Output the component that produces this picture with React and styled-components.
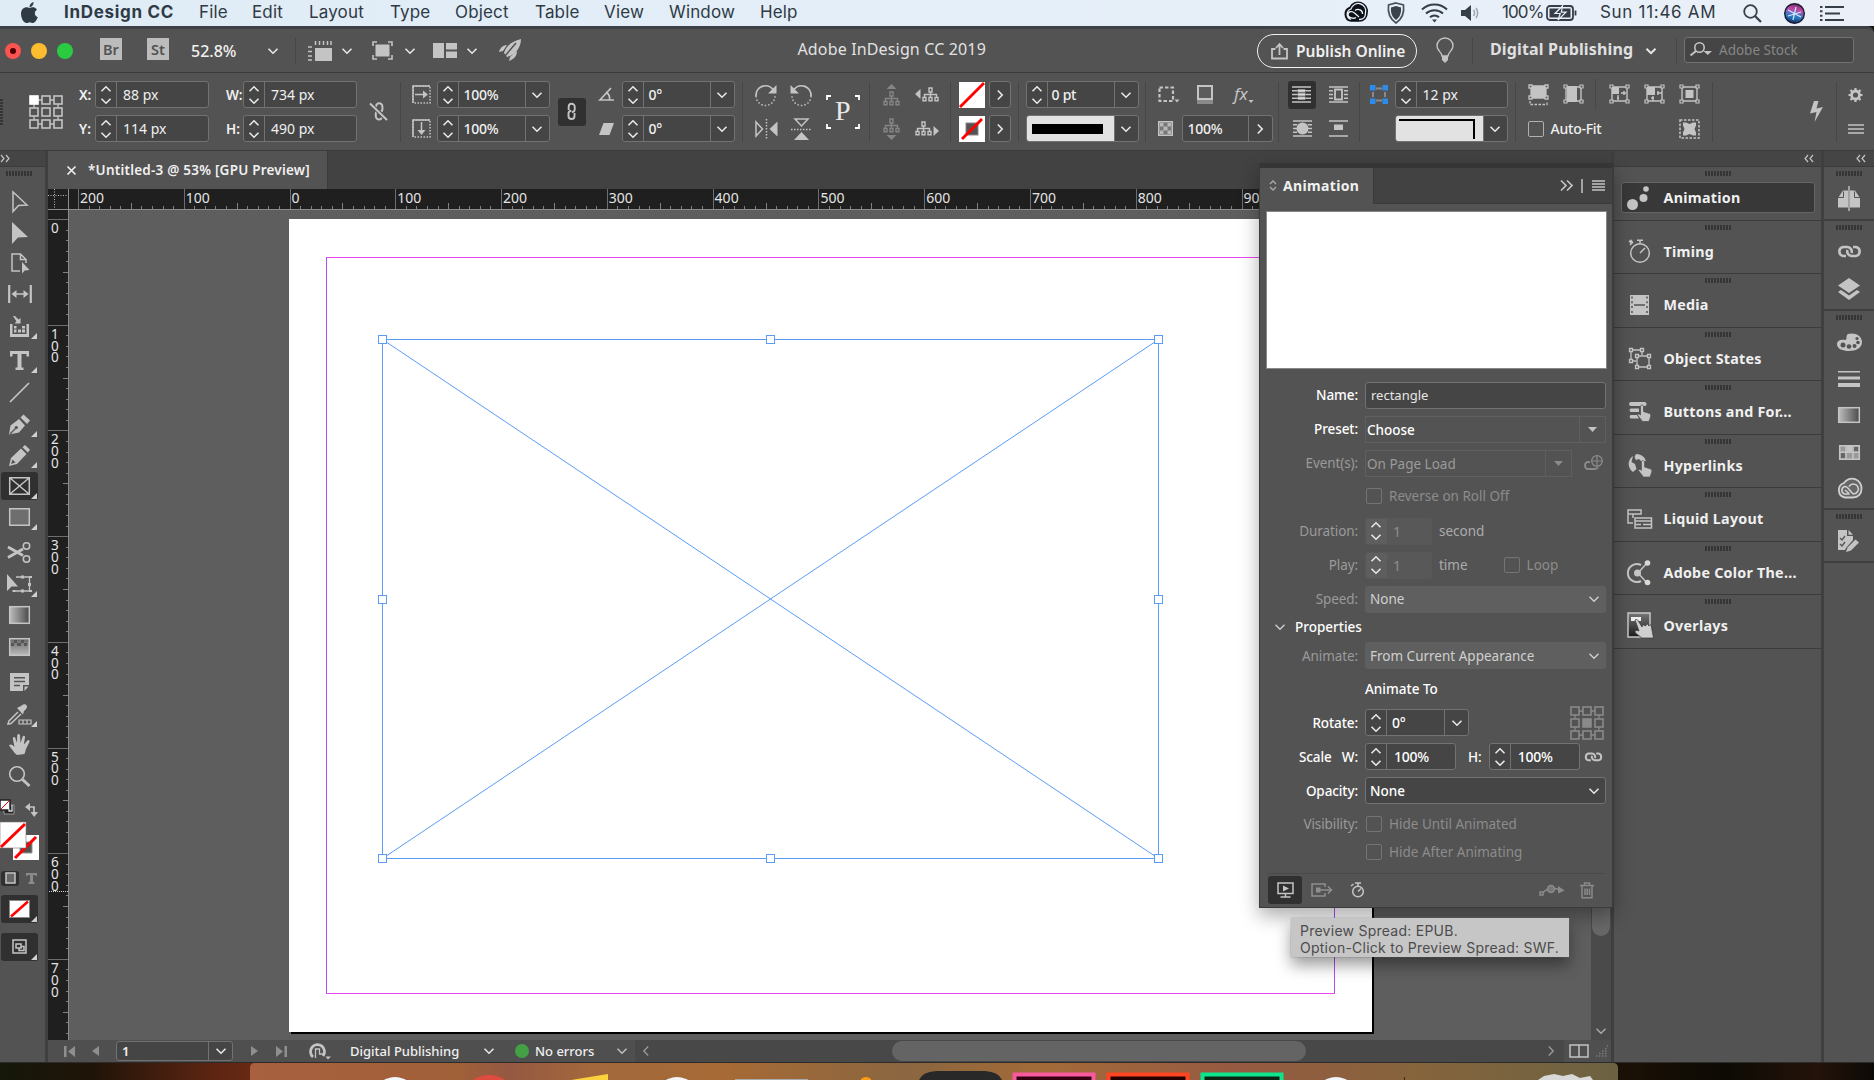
import React, { Fragment } from 'react';
import styled, { createGlobalStyle, css } from 'styled-components';

const GlobalStyle = createGlobalStyle`
  * { box-sizing: border-box; }
  body {
    margin: 0;
    overflow: hidden;
    background: #1c1206;
    font-family: "Noto Sans", "Open Sans", sans-serif;
    color: #f0f0f0;
  }
  svg { display: block; flex: none; overflow: visible; }
`

const Screen = styled.div`
  width: 1874px;
  height: 1080px;
  display: flex;
  flex-direction: column;
  overflow: hidden;
`

/* ---------- mac menu bar ---------- */

const MacBar = styled.div`
  height: 26px;
  flex: none;
  display: flex;
  align-items: center;
  background: linear-gradient(90deg, #dfebf5, #e3eef8 45%, #ebf0f8);
  color: #2f3a45;
  font-family: Inter, "Liberation Sans", sans-serif;
  font-size: 17px;
  line-height: 22px;
  white-space: nowrap;
`

const MacItem = styled.span`
  flex: none;
  width: ${p => p.$w}px;
  letter-spacing: ${p => p.$ls === undefined ? 0.15 : p.$ls}px;
  font-weight: ${p => p.$bold ? 700 : 400};
  padding-bottom: 3px;
`

const Push = styled.div`
  flex: 1;
`

/* ---------- shared bits ---------- */

const Slot = styled.div`
  flex: none;
  width: ${p => p.$w}px;
  margin-left: ${p => p.$gap || 0}px;
  display: flex;
  align-items: center;
  white-space: nowrap;
`

const Rule = styled.div`
  flex: none;
  width: 1px;
  height: ${p => p.$h || 60}px;
  margin-left: ${p => p.$gap || 0}px;
  align-self: ${p => p.$top ? 'flex-start' : 'auto'};
  margin-top: ${p => p.$top ? 6 : 0}px;
  background: #474747;
`

const Field = styled.div`
  flex: none;
  display: flex;
  align-items: stretch;
  width: ${p => p.$w}px;
  height: 27px;
  border: 1px solid #727272;
  border-radius: 3px;
  background: #454545;
  overflow: hidden;
  ${p => p.$off && css`
    border-color: transparent;
    background: #585858;
    color: #8d8d8d;
  `}
`

const Spin = styled.div`
  width: 21px;
  flex: none;
  display: flex;
  flex-direction: column;
  align-items: center;
  justify-content: space-between;
  padding: 3.5px 0;
  border-right: 1px solid ${p => p.$off ? 'transparent' : '#727272'};
  background: ${p => p.$off ? '#5e5e5e' : 'transparent'};
`

const Value = styled.div`
  flex: 1;
  padding-left: ${p => p.$pad || 6}px;
  font-size: 14px;
  line-height: 26px;
  white-space: nowrap;
  font-weight: ${p => p.$strong ? 500 : 400};
  letter-spacing: ${p => p.$strong ? -0.25 : 0}px;
`

const Drop = styled.div`
  width: ${p => p.$w || 24}px;
  flex: none;
  display: flex;
  align-items: center;
  justify-content: center;
  border-left: 1px solid ${p => p.$line || '#727272'};
`

const Chevron = ({ dir = 'down', size = 10, color = '#e8e8e8', w = 1.6 }) => {
  const turn = { down: 0, up: 180, left: 90, right: -90 }[dir];
  return (
    <svg width={size} height={size * 0.6} viewBox="0 0 10 6">
      <path d="M0.5 0.8 5 5.2 9.5 0.8" fill="none" stroke={color} strokeWidth={w} transform={`rotate(${turn} 5 3)`} />
    </svg>
  )
}

const Spinner = ({ off }) => (
  <Spin $off={off}>
    <Chevron dir="up" />
    <Chevron />
  </Spin>
)

const NumField = ({ w, value, drop, strong, off, pad }) => (
  <Field $w={w} $off={off}>
    <Spinner off={off} />
    <Value $pad={pad} $strong={strong}>{value}</Value>
    {drop && <Drop><Chevron /></Drop>}
  </Field>
)

/* Icon with light grey line work; children are the shapes */
const Icon = ({ w, h = w, box, children, fill = 'none', stroke = '#c4c4c4', sw = 1.5, ...rest }) => (
  <svg width={w} height={h} viewBox={box || `0 0 ${w} ${h}`} fill={fill} stroke={stroke} strokeWidth={sw} {...rest}>
    {children}
  </svg>
)

const Solid = (props) => <Icon fill="#c4c4c4" stroke="none" {...props} />

const RefGrid = ({ active, color = '#c4c4c4', on = '#fff' }) => (
  <Icon w={34} stroke={color} sw={1.6}>
    <path d="M5 5H29M5 29H29M5 5V29M29 5V29" strokeWidth="1.3" />
    {[0, 1, 2, 3, 4, 5, 6, 7, 8].map(i => (
      <rect key={i} x={1 + (i % 3) * 12} y={1 + Math.floor(i / 3) * 12} width="8" height="8"
            fill={i === active ? on : '#535353'} stroke={i === active ? on : color} />
    ))}
  </Icon>
)

/* ---------- application bar ---------- */

const Frame = styled.div`
  flex: none;
  height: 1037px;
  display: flex;
  flex-direction: column;
  background: #535353;
  border-top: 3px solid #3d4045;
  border-bottom: 1px solid #2c2c2c;
  border-top-right-radius: 7px;
`

const AppBar = styled.div`
  height: 44px;
  flex: none;
  display: flex;
  align-items: center;
  border-bottom: 1px solid #3b3b3b;
`

const Light = styled.div`
  width: 16px;
  height: 16px;
  flex: none;
  border-radius: 50%;
  margin-left: ${p => p.$gap}px;
  background: ${p => p.$color};
  display: flex;
  align-items: center;
  justify-content: center;
  &::after {
    content: ${p => p.$dot ? '""' : 'none'};
    width: 6px;
    height: 6px;
    border-radius: 50%;
    background: #4d0000;
  }
`

const Badge = styled.div`
  width: 22px;
  height: 22px;
  flex: none;
  margin-left: ${p => p.$gap}px;
  margin-top: -3px;
  background: #bcbcbc;
  color: #535353;
  font-size: 14.5px;
  font-weight: 600;
  line-height: 23px;
  text-align: center;
`

const Zoom = styled(Slot)`
  font-size: 16px;
  font-weight: 500;
  letter-spacing: 0;
`

const Title = styled(Slot)`
  font-size: 16px;
  color: #e2e2e2;
  letter-spacing: 0.15px;
  padding-bottom: 3px;
`

const Publish = styled.div`
  width: 160px;
  height: 34px;
  flex: none;
  display: flex;
  align-items: center;
  gap: 8px;
  padding-left: 13px;
  margin-left: ${p => p.$gap}px;
  border: 1.5px solid #f0f0f0;
  border-radius: 17px;
  font-size: 15.5px;
  font-weight: 600;
  white-space: nowrap;
`

const Workspace = styled(Slot)`
  font-size: 16px;
  font-weight: 700;
  color: #e0e0e0;
  letter-spacing: 0.15px;
  padding-bottom: 3px;
`

const StockSearch = styled.div`
  width: 170px;
  height: 26px;
  flex: none;
  margin-left: ${p => p.$gap}px;
  margin-top: -2px;
  display: flex;
  align-items: center;
  gap: 7px;
  padding-left: 5px;
  border: 1.5px solid #727272;
  border-radius: 3px;
  background: #454545;
  color: #858585;
  font-size: 13.5px;
`

/* ---------- control bar ---------- */

const ControlBar = styled.div`
  height: 78px;
  flex: none;
  display: flex;
  align-items: center;
  border-bottom: 1px solid #3b3b3b;
`

const Stack = styled.div`
  flex: none;
  width: ${p => p.$w}px;
  margin-left: ${p => p.$gap || 0}px;
  display: grid;
  grid-template-rows: 27px 27px;
  row-gap: 7px;
  align-items: center;
  white-space: nowrap;
`

const Row = styled.div`
  display: flex;
  align-items: center;
  gap: ${p => p.$gap || 0}px;
`

const AxisLabel = styled.div`
  font-size: 13.5px;
  font-weight: 600;
`

const DarkKey = styled.div`
  width: ${p => p.$w || 28}px;
  height: 28px;
  flex: none;
  margin-left: ${p => p.$gap || 0}px;
  border-radius: 3px;
  background: #303030;
  display: flex;
  align-items: center;
  justify-content: center;
`

const ArrowKey = styled.div`
  width: 22px;
  height: 27px;
  border: 1px solid #727272;
  border-radius: 3px;
  background: #454545;
  display: flex;
  align-items: center;
  justify-content: center;
`

const Sample = styled.div`
  flex: 1;
  background: #e2e2e2;
  display: flex;
  align-items: center;
  padding-left: 5px;
`

const Check = styled.div`
  width: 16px;
  height: 16px;
  flex: none;
  border: 1.5px solid ${p => p.$off ? '#747474' : '#b0b0b0'};
  border-radius: 2px;
`

const Grip = styled.div`
  width: 26px;
  height: 5px;
  background: repeating-linear-gradient(90deg, #353535 0 2px, transparent 2px 3px);
`

const SideGrip = styled.div`
  width: 3px;
  height: 26px;
  background: repeating-linear-gradient(180deg, #353535 0 2px, transparent 2px 3px);
`

const Tree = ({ dir, dim }) => {
  const c = dim ? '#858585' : '#c4c4c4';
  const vertical = dir === 'up' || dir === 'down';
  const ox = dir === 'left' ? 7 : 0;
  const oy = dir === 'up' ? 7 : 0;
  const arrows = {
    up: 'M3.5 5 8.5 0 13.5 5Z', down: 'M3.5 17 8.5 22 13.5 17Z',
    left: 'M5.5 2V12L0 7Z', right: 'M18.5 5V15L24 10Z'
  };
  return (
    <Icon w={vertical ? 17 : 24} h={vertical ? 22 : 15} stroke={c} sw={1.4}>
      <g transform={`translate(${ox} ${oy})`}>
        <path d="M7 1H10V5H7ZM8.5 5V10M2.5 10V7.5H14.5V10M1 10.5H4V13.8H1ZM7 10.5H10V13.8H7ZM13 10.5H16V13.8H13Z" />
      </g>
      <path d={arrows[dir]} fill={c} stroke="none" />
    </Icon>
  )
}

const NoneSwatch = ({ w = 26, stroke }) => (
  <svg width={w} height={w} viewBox="0 0 26 26">
    <rect width="26" height="26" fill="#fff" />
    {stroke && <rect x="7" y="7" width="12" height="12" fill="#535353" stroke="#888" />}
    <path d={stroke ? 'M3 23 23 3' : 'M1 25 25 1'} stroke="#f00" strokeWidth="2.8" />
  </svg>
)

const Link = ({ cut, size = 18, color = '#c4c4c4' }) => (
  <Icon w={size} h={19} box="0 0 18 19" stroke={color} sw={2}>
    <path d="M6 8V4.5a3.2 3.2 0 0 1 6.4 0V7.5a3 3 0 0 1-3 2.6M12.2 11V14.3a3.2 3.2 0 0 1-6.4 0V11.5a3 3 0 0 1 3-2.8" />
    {cut && <path d="M0 1.5 17 18" stroke="#535353" strokeWidth="4" />}
    {cut && <path d="M0 1.5 17 18" />}
  </Icon>
)

const ChainLink = ({ w = 25, color = '#c4c4c4' }) => (
  <Icon w={w} h={w * 0.52} box="0 0 25 13" stroke={color} sw={2.6}>
    <path d="M9 11H6A4.6 4.6 0 0 1 6 2H10.500A4.600 4.600 0 0 1 14.500 8M16 2H19A4.600 4.600 0 0 1 19 11H14.500A4.600 4.600 0 0 1 10.500 5" />
  </Icon>
)

const FitBox = ({ children }) => (
  <Icon w={21} h={21} sw={1.4}>
    <path d="M3 3H18V17H3Z" />
    <path d="M1 1H4V4H1ZM17 1H20V4H17ZM1 16H4V19H1ZM17 16H20V19H17Z" fill="#535353" strokeWidth="1.2" />
    {children}
  </Icon>
)

const WrapLines = ({ children, sides }) => (
  <Icon w={19} h={17} sw={1.5}>
    <path d="M0 1H19M0 16H19" />
    {sides && <path d="M0 4.7H4M0 8.5H4M0 12.3H4M15 4.7H19M15 8.5H19M15 12.3H19" />}
    {children}
  </Icon>
)

/* ---------- workspace ---------- */

const Body = styled.div`
  flex: 1;
  min-height: 0;
  display: flex;
`

const ToolColumn = styled.div`
  width: 48px;
  flex: none;
  display: flex;
  flex-direction: column;
  border-right: 3px solid #3f3f3f;
`

const ToolGrip = styled.div`
  flex: none;
  height: 9px;
  padding: 4px 0 0 6px;
`

const ColumnHead = styled.div`
  height: 16px;
  flex: none;
  display: flex;
  align-items: center;
  justify-content: ${p => p.$end ? 'flex-end' : 'flex-start'};
  padding-right: ${p => p.$end || 0}px;
  background: #454545;
  border-bottom: 1px solid #3b3b3b;
`

const Tool = styled.div`
  position: relative;
  width: 37px;
  height: 28px;
  flex: none;
  margin: ${p => p.$gap || 3}px 0 0 1px;
  border-radius: 3px;
  display: flex;
  align-items: center;
  justify-content: center;
  background: ${p => p.$on ? '#303030' : 'transparent'};
  &::after {
    content: ${p => p.$more ? '""' : 'none'};
    position: absolute;
    right: 1px;
    bottom: 1px;
    border-left: 6px solid transparent;
    border-bottom: 6px solid #d0d0d0;
  }
`

const DocColumn = styled.div`
  position: relative;
  width: 1563px;
  flex: none;
  display: flex;
  flex-direction: column;
`

const TabStrip = styled.div`
  height: 38px;
  flex: none;
  display: flex;
  background: #424242;
`

const DocTab = styled.div`
  width: 280px;
  display: flex;
  align-items: center;
  gap: 12px;
  padding-left: 19px;
  background: #535353;
  border-right: 1px solid #3b3b3b;
  font-size: 13.5px;
  font-weight: 600;
  letter-spacing: 0.22px;
  white-space: nowrap;
`

const Canvas = styled.div`
  position: relative;
  flex: 1;
  background: #5e5e5e;
  overflow: hidden;
`

const Page = styled.div`
  position: absolute;
  left: 220px;
  top: 9px;
  width: 1083px;
  height: 813px;
  background: #fff;
  box-shadow: 2px 2px 0 #000;
`

const Margins = styled.div`
  position: absolute;
  left: 37px;
  top: 38px;
  width: 1009px;
  height: 737px;
  border: 1px solid;
  border-color: #ea48ea #b050f8;
`

const FrameShape = styled.svg`
  position: absolute;
  left: 313px;
  top: 130px;
`

const ViewRow = styled.div`
  flex: 1;
  min-height: 0;
  display: flex;
`

const VScroll = styled.div`
  width: 20px;
  flex: none;
  background: #4a4a4a;
  display: flex;
  flex-direction: column;
  align-items: center;
  justify-content: flex-end;
  padding-bottom: 6px;
`

const VThumb = styled.div`
  width: 18px;
  height: 120px;
  margin-bottom: 92px;
  border-radius: 9px;
  background: #686868;
`

const StatusBar = styled.div`
  height: 22px;
  flex: none;
  display: flex;
  align-items: center;
  background: #4f4f4f;
  font-size: 13px;
  font-weight: 500;
`

const PageField = styled.div`
  width: 117px;
  height: 20px;
  flex: none;
  margin-left: 17px;
  display: flex;
  border: 1px solid #727272;
  border-radius: 3px;
  background: #454545;
  padding-left: 5px;
  font-weight: 600;
  line-height: 19px;
`

const HScroll = styled.div`
  width: 929px;
  height: 22px;
  flex: none;
  margin-left: 8px;
  display: flex;
  align-items: center;
  justify-content: space-between;
  padding: 0 8px 0 6px;
  background: #484848;
`

const HThumb = styled.div`
  width: 414px;
  height: 20px;
  border-radius: 10px;
  background: #646464;
`

const Dot = styled.div`
  width: 14px;
  height: 14px;
  flex: none;
  margin-left: 21px;
  border-radius: 50%;
  background: #43a045;
`

/* ---------- animation panel ---------- */

const Panel = styled.div`
  position: absolute;
  left: 1211px;
  top: 12px;
  width: 355px;
  height: 745px;
  display: flex;
  flex-direction: column;
  border: 1px solid #3b3b3b;
  border-top: 5px solid #353535;
  border-right-width: 2px;
  background: #535353;
  box-shadow: 0 8px 18px rgba(0, 0, 0, 0.32);
`

const PanelHead = styled.div`
  height: 36px;
  flex: none;
  display: flex;
  align-items: center;
  background: #424242;
  border-bottom: 1px solid #3b3b3b;
`

const PanelTab = styled.div`
  width: 114px;
  height: 36px;
  flex: none;
  display: flex;
  align-items: center;
  gap: 6px;
  padding-left: 9px;
  background: #535353;
  border-right: 1px solid #3b3b3b;
  font-size: 14px;
  font-weight: 700;
  letter-spacing: 0.35px;
`

const Preview = styled.div`
  height: 158px;
  flex: none;
  margin: 7px 5px 12px 6px;
  background: #fff;
  border: 1px solid #888;
`

const FormRow = styled.div`
  height: ${p => p.$h || 34}px;
  flex: none;
  display: flex;
  align-items: center;
  font-size: 13.5px;
  white-space: nowrap;
  color: ${p => p.$off ? '#9a9a9a' : '#fff'};
  font-weight: ${p => p.$off ? 400 : 500};
`

const Caption = styled.div`
  width: 98px;
  flex: none;
  margin-right: 7px;
  text-align: right;
  letter-spacing: -0.1px;
`

const Select = styled.div`
  width: ${p => p.$w || 241}px;
  height: 27px;
  flex: none;
  display: flex;
  align-items: center;
  justify-content: space-between;
  padding: 0 6px 0 4px;
  border-radius: 3px;
  background: ${p => p.$bg || '#5f5f5f'};
  border: 1px solid ${p => p.$line || 'transparent'};
  color: ${p => p.$color || '#cfcfcf'};
`

const NameInput = styled(Select)`
  padding-left: 5px;
  font-weight: 400;
  font-size: 13px;
`

const Combo = styled.div`
  width: ${p => p.$w}px;
  height: 27px;
  flex: none;
  display: flex;
  border: 1px solid #5f5f5f;
  line-height: 27px;
  padding-left: 1px;
  justify-content: space-between;
`

const Text = styled.div`
  margin-left: ${p => p.$gap || 0}px;
  color: ${p => p.$color || 'inherit'};
`

const PanelFoot = styled.div`
  height: 34px;
  flex: none;
  margin: 0 7px;
  padding-bottom: 1px;
  display: flex;
  align-items: center;
  border-top: 1px solid #4a4a4a;
`

const Tooltip = styled.div`
  position: absolute;
  left: 1243px;
  top: 767px;
  width: 278px;
  height: 39px;
  padding: 4px 0 0 9px;
  background: #c6c6c6;
  box-shadow: 0 8px 16px rgba(0, 0, 0, 0.4), 0 0 1px #888;
  color: #4c4c4c;
  font-family: Inter, "Liberation Sans", sans-serif;
  font-size: 14px;
  letter-spacing: 0.25px;
  line-height: 17px;
  white-space: nowrap;
`

/* ---------- right panels ---------- */

const PanelList = styled.div`
  width: 213px;
  flex: none;
  border-left: 3px solid #3f3f3f;
  border-right: 3px solid #3f3f3f;
`

const ListCell = styled.div`
  height: 53.5px;
  display: flex;
  flex-direction: column;
  align-items: center;
  padding-top: 4px;
  border-bottom: 1px solid #3b3b3b;
`

const ListButton = styled.div`
  width: 194px;
  height: 31px;
  margin-top: 6px;
  display: flex;
  align-items: center;
  border: 1px solid ${p => p.$on ? '#666' : 'transparent'};
  border-radius: 3px;
  background: ${p => p.$on ? '#383838' : 'transparent'};
  font-size: 14.3px;
  font-weight: 700;
  letter-spacing: 0.25px;
  white-space: nowrap;
`

const ListIcon = styled.div`
  width: 42px;
  padding-left: 5px;
  display: flex;
  align-items: center;
`

const IconDock = styled.div`
  width: 50px;
  flex: none;
`

const DockGroup = styled.div`
  height: ${p => p.$h}px;
  display: flex;
  flex-direction: column;
  align-items: center;
  padding-top: 4px;
  border-bottom: 2px solid #3f3f3f;
`

const DockItem = styled.div`
  height: 36.8px;
  display: flex;
  align-items: center;
  margin-top: ${p => p.$first ? 4 : 0}px;
`

const Desktop = styled.div`
  flex: 1;
  background: linear-gradient(90deg, #15180a, #201408 5%, #5a2412 11%, #6b2b12 14%, #1a1006 87%, #0c0a04 92%, #24130a 97%, #0c0a06);
`

/* ---------- data ---------- */

const menus = [
  ['File', 53], ['Edit', 57], ['Layout', 81], ['Type', 65], ['Object', 80],
  ['Table', 69], ['View', 65], ['Window', 91], ['Help', 60]
];

const HorizontalRuler = () => {
  const step = 105.78;
  const zero = 220.5;
  const ticks = [];
  for (let i = -20; i < 96; i++) {
    const x = Math.round(zero + (i * step) / 10) + 0.5;
    const top = i % 10 === 0 ? 0 : i % 5 === 0 ? 14 : 17;
    ticks.push(<path key={i} d={`M${x} ${top}V20`} stroke={i % 10 === 0 ? '#6e6e6e' : '#808080'} />)
  }
  return (
    <svg width="1542" height="21">
      <rect width="1542" height="21" fill="#1f1f1f" />
      {ticks}
      <path d="M0 20.5H1542" stroke="#8c8c8c" />
      {[-2, -1, 0, 1, 2, 3, 4, 5, 6, 7, 8, 9].map(n => (
        <text key={n} x={zero + n * step + 2} y="14" fontSize="14" fill="#e4e4e4">{Math.abs(n) * 100}</text>
      ))}
    </svg>
  )
}

const VerticalRuler = () => {
  const step = 105.7;
  const zero = 9;
  const ticks = [];
  for (let i = 0; i < 78; i++) {
    const y = Math.round(zero + (i * step) / 10) + 0.5;
    const left = i % 10 === 0 ? 0 : i % 5 === 0 ? 15 : 18;
    ticks.push(<path key={i} d={`M${left} ${y}H20`} stroke={i % 10 === 0 ? '#6e6e6e' : '#808080'} />)
  }
  return (
    <svg width="21" height="831">
      <rect width="21" height="831" fill="#1f1f1f" />
      {ticks}
      <path d="M20.5 0V831" stroke="#8c8c8c" />
      <path d="M1 681.5H20" stroke="#d0d0d0" strokeDasharray="1 1" />
      {[0, 1, 2, 3, 4, 5, 6, 7].map(n => (
        String(n * 100).split('').map((digit, k) => (
          <text key={`${n}-${k}`} x="3" y={zero + n * step + 14 + k * 11.8} fontSize="13.5" fill="#e4e4e4">{digit}</text>
        ))
      ))}
    </svg>
  )
}

const handles = [[0, 0], [388, 0], [776, 0], [0, 260], [776, 260], [0, 519], [388, 519], [776, 519]];

const tools = [
  { gap: 12, icon: <Icon w={16} h={22}><path d="M1 1V20.5L6.5 14.5 15 14Z" /></Icon> },
  { icon: <Solid w={16} h={22}><path d="M0 0V22L6 15.5 16 15Z" /></Solid> },
  { gap: 2, icon: <Icon w={18} h={20}><path d="M9 18H1V1H9.5L15 6.5V10M9.5 1V6.5H15" /><path d="M11 9V20.5L13.8 17.5 18.5 17Z" fill="#c4c4c4" stroke="none" /></Icon> },
  { icon: <Icon w={24} h={18} sw={1.5}><path d="M1.2 0V18M22.8 0V18" strokeWidth="2.2" /><path d="M5 9H19" /><path d="M3.5 9 8.5 5V13ZM20.5 9 15.5 5V13Z" fill="#c4c4c4" stroke="none" /></Icon> },
  { gap: 4, more: 1, icon: <Solid w={19} h={21}><path d="M0 8H2.5V18H16.5V8H19V21H0ZM3 0H5L8.5 3.5 10.5 2V7.5H4.5L6.5 5.5Z" /><path d="M4 13.5H6.5V16.5H4ZM8 13.5H11V16.5H8ZM12 13.5H15V16.5H12ZM4 10H6.5V12.5H4ZM12 10H15V12.5H12Z" /></Solid> },
  { gap: 6, more: 1, icon: <Solid w={19} h={19}><path d="M0 0H19V5.5H16.5V3H11.5V16.5H13.5V19H5.5V16.5H7.5V3H2.5V5.5H0Z" /></Solid> },
  { gap: 4, icon: <Icon w={19} h={19} sw={1.7}><path d="M0 19 19 0" /></Icon> },
  { gap: 4, more: 1, icon: <Solid w={21} h={21}><path d="M0 20.5 1.500 11.500 10 5 16 11.500 10 18.500 0 20.500Z" /><path d="M1 20 7 14" stroke="#535353" strokeWidth="1.2" /><circle cx="7.3" cy="13.5" r="1.6" fill="#535353" /><path d="M11.5 3.5 14.5 0.5 21 6.5 18 10Z" /></Solid> },
  { more: 1, icon: <Solid w={21} h={21}><path d="M0 21 2 13 12 3.5 17.5 9 8 19ZM13.5 2.2 16 0 21 4.7 18.8 7.5Z" /><path d="M2 19 3.5 14.5 6.5 17.5Z" fill="#535353" /></Solid> },
  { more: 1, on: 1, icon: <Icon w={21} h={18} sw={1.5}><path d="M0.7 0.7H20.3V17.3H0.7ZM0.7 0.7 20.3 17.3M20.3 0.7 0.7 17.3" /></Icon> },
  { more: 1, icon: <Icon w={21} h={18}><path d="M0.7 0.7H20.3V17.3H0.7Z" fill="#6e6e6e" /></Icon> },
  { gap: 7, icon: <Icon w={23} h={21}><path d="M0 5 15 13.5M0 15.5 15 7" strokeWidth="2.8" /><circle cx="18.5" cy="4" r="3.2" /><circle cx="18.5" cy="17" r="3.2" /></Icon> },
  { gap: 4, more: 1, icon: <Icon w={25} h={20}><path d="M9 3H22.5V17H6" strokeWidth="1.3" /><path d="M14 3H17M14 17H17M23.5 2V4M23.5 16V18M22.5 9V12M7 16V18" strokeWidth="3" /><path d="M0 0V17L4.5 12.5H11Z" fill="#c4c4c4" stroke="none" /></Icon> },
  { icon: <svg width="21" height="18"><defs><linearGradient id="g1"><stop offset="0" stopColor="#bdbdbd" /><stop offset="1" stopColor="#4a4a4a" /></linearGradient></defs><rect x="0.7" y="0.7" width="19.6" height="16.6" fill="url(#g1)" stroke="#c4c4c4" strokeWidth="1.5" /></svg> },
  { gap: 4, icon: <svg width="21" height="18"><defs><linearGradient id="g2" x2="0" y2="1"><stop offset="0" stopColor="#666" /><stop offset="1" stopColor="#bbb" /></linearGradient></defs><rect x="0.7" y="0.7" width="19.6" height="16.6" fill="url(#g2)" stroke="#c4c4c4" strokeWidth="1.5" /><path d="M5 2H8V5H5ZM12 2H15V5H12ZM2 5H5V8H2ZM8 5H12V8H8ZM15 5H18V8H15Z" fill="#555" /></svg> },
  { gap: 7, icon: <Solid w={19} h={18}><path d="M0 0H19V12H13V18H0ZM14.5 13.5H18.5L14.5 18Z" /><path d="M4 4.7H15M4 8.5H15M4 12.5H10" stroke="#535353" strokeWidth="1.5" /></Solid> },
  { gap: 4, more: 1, icon: <Icon w={25} h={21}><path d="M11 8 2 17 1 20 4 19.5 14 10" /><path d="M10 4 14 2C17-1 20 0 20 2.5S18 6 17 7L16 10.5Z" fill="#c4c4c4" stroke="none" /><path d="M12 16H24V20H12ZM16 16V20M20 16V20" strokeWidth="1.2" /></Icon> },
  { gap: 2.5, icon: <Solid w={21} h={21}><path d="M8 21C5 19 3 15 0 11.5 1 9.5 3.5 10.5 5.5 13L3.8 4.5C4 2.5 6 2.5 6.5 4.5L8 9 8.2 1.5C8.5-.5 10.7-.5 11 1.5L11.5 9 13.7 2.5C14.2 1 16.4 1.5 16 3.5L14.8 10.5 18.5 6.5C19.5 5.5 21.2 6.5 20.3 8.3L17 15 15.5 20Z" /></Solid> },
  { gap: 4, icon: <Icon w={22} h={21} sw={1.6}><circle cx="8" cy="8" r="7.3" /><path d="M13.5 13.5 20.5 20" strokeWidth="3" /></Icon> }
];

const hand = 'M0 0C0-2 3-2 3 0V5L9 7C10.5 7.5 10.5 9 10 10.5L8.5 15H2L-3 8.5C-3 7 -1.5 7 0 8.5Z';

const panels = [
  ['Animation', <Solid w={22} h={24}><circle cx="5.5" cy="18.5" r="5.5" /><circle cx="16.5" cy="12" r="4" /><circle cx="19" cy="3" r="2.8" /></Solid>],
  ['Timing', <Icon w={24} h={24}><circle cx="13" cy="14" r="9.3" /><path d="M10 1.2H16M13 1V5M13 14 18 9M3 6 6 3" /><path d="M2.5 3.5 5 1.5" strokeWidth="3" /></Icon>],
  ['Media', <Solid w={23} h={20}><path d="M3 0H22V20H3Z" /><path d="M7 10H18" stroke="#535353" strokeWidth="1.5" /><path d="M5 1.5V19M20 1.5V19" stroke="#535353" strokeWidth="1.5" strokeDasharray="2 2.8" /></Solid>],
  ['Object States', <Icon w={24} h={22} sw={1.3}><path d="M4 3H15V8M4 3V14H9M10 9H22V20H10Z" /><path d="M2.5 1.5H5.5V4.5H2.5ZM13.5 1.5H16.5V4.5H13.5ZM2.5 12.5H5.5V15.5H2.5ZM8.500 7.500H11.500V10.500H8.500ZM20.500 7.500H23.500V10.500H20.500ZM8.500 18.500H11.500V21.500H8.500ZM20.500 18.500H23.500V21.500H20.500Z" fill="#535353" /></Icon>],
  ['Buttons and For...', <Solid w={24} h={20}><path d="M4 0H17A2 2 0 0 1 18 4H4A2 2 0 0 1 4 0ZM4 6.5H12V10H4A1.8 1.8 0 0 1 4 6.5ZM4 13H10L12 16.5H4A1.8 1.8 0 0 1 4 13Z" /><path d={hand} transform="translate(13.5 4.5)" stroke="#535353" strokeWidth="0.8" /></Solid>],
  ['Hyperlinks', <Solid w={25} h={22}><path d="M6 2A9.500 9.500 0 0 0 6 18L9.500 15 8 10 4.500 8ZM9 0A10 10 0 0 1 19 7L14 7 12 5 9 6 7.500 3Z" /><path d={hand} transform="translate(14.5 8)" stroke="#535353" strokeWidth="0.6" /></Solid>],
  ['Liquid Layout', <Icon w={25} h={20}><path d="M1 1H14V5H1ZM1 5V14H6M6 5V9M8 9H24.5V19H8ZM8 12H24.5M16 15.5H24M8 15.5H14" /></Icon>],
  ['Adobe Color The...', <Icon w={24} h={25}><path d="M14 5A9 9 0 1 0 14 21" strokeWidth="2" /><circle cx="10.5" cy="13" r="3.5" fill="#c4c4c4" stroke="none" /><path d="M11 13 20 3M11 13 20 23" /><circle cx="20.5" cy="3" r="2.8" fill="#d8d8d8" stroke="none" /><circle cx="20.5" cy="22.5" r="2.8" fill="#d8d8d8" stroke="none" /></Icon>],
  ['Overlays', <svg width="26" height="27"><defs><linearGradient id="g3" x2="0" y2="1"><stop offset="0" stopColor="#777" /><stop offset="1" stopColor="#1c1c1c" /></linearGradient></defs><rect x="1" y="1" width="22" height="24" fill="url(#g3)" stroke="#c8c8c8" strokeWidth="1.5" /><path d="M4 5H14V9H4Z" fill="#eee" /><path d="M8 8C9 7 10.5 7.500 11 8.500L15 15 16 12.500 18.500 14 20 11.500 22 14 24 12.500 26.500 26H15L8.500 21C7 18.500 9.500 18 12 19Z" fill="#cfcfcf" stroke="#333" strokeWidth="0.7" /></svg>]
];

const dockGroups = [
  [53.5, [<Solid w={22} h={25}><path d="M0 12 5 4.5H10V21.5H0ZM22 12 17 4.5H12V21.5H22Z" /><path d="M11 0V25" stroke="#c4c4c4" strokeWidth="1.4" /><path d="M0 11.5H5.5V5.5M22 11.5H16.5V5.5" fill="none" stroke="#535353" strokeWidth="1" /></Solid>]],
  [90, [<ChainLink />, <Solid w={22} h={22}><path d="M11 0 22 7.5 11 15 0 7.5ZM0 14 3 12 11 17.5 19 12 22 14 11 22Z" /></Solid>]],
  [199.5, [
    <Solid w={25} h={18}><path d="M0 11C0 8 3 6 8 7 11 7 8 3 11 1 17-1 25 2 25 9 25 15 19 18 12 18 6 18 0 16 0 11Z" /><g fill="#535353"><circle cx="6" cy="12" r="2.5" /><circle cx="12" cy="13.5" r="2.3" /><circle cx="17.5" cy="13" r="2" /><circle cx="21" cy="9.5" r="1.8" /><circle cx="20" cy="5.5" r="1.6" /></g></Solid>,
    <Solid w={22} h={16}><path d="M0 0H22V1.5H0ZM0 5.5H22V8.5H0ZM0 12H22V16H0Z" /></Solid>,
    <svg width="22" height="16"><rect x="0.7" y="0.7" width="20.6" height="14.6" fill="url(#g1)" stroke="#c4c4c4" strokeWidth="1.5" /></svg>,
    <Icon w={21} h={15} sw={1.5}><path d="M0.7 0.7H20.3V14.3H0.7Z" fill="#9a9a9a" /><path d="M2 8H6V13H2ZM14.5 2H19V6.5H14.5Z" fill="#666" stroke="none" /><path d="M7 1V14M14 1V14M1 7.3H20" /><path d="M8 1H13V7H8Z" fill="#c4c4c4" stroke="none" /></Icon>,
    <Icon w={27} h={20} sw={1.8} stroke="#cfcfcf"><path d="M9 18.5A7.500 7.500 0 0 1 8 4 9.500 9.500 0 0 1 25.500 10C25.500 15 22 18.500 17 18.500Z" fill="#666" /><path d="M13.5 15H8.500A4 4 0 0 1 8.500 7.500C12.500 7 14 13.500 17.500 15A5 5 0 1 0 13 7.500M9 11 13 14.500" strokeWidth="1.600" /></Icon>
  ]],
  [53, [<Solid w={22} h={23}><path d="M0 0H9V6H15V10L8 18 7 20H0ZM10.5 0 15 4.7H10.5ZM8 22 9.5 17.5 17.5 9.5 21 12.5 13 20.5Z" /><path d="M2 8 4 10 7 6M2 14 4 16 7 12" fill="none" stroke="#535353" strokeWidth="1.3" /></Solid>]]
];

const AnimationPanel = () => (
  <Panel>
    <PanelHead>
      <PanelTab>
        <Icon w={8} h={11} stroke="#aaa" sw={1.3}><path d="M1 4 4 1 7 4M1 7 4 10 7 7" /></Icon>
        Animation
      </PanelTab>
      <Slot $w={14} $gap={186}><Icon w={13} h={11} sw={1.7}><path d="M1 0.5 6 5.5 1 10.5M7 0.5 12 5.5 7 10.5" /></Icon></Slot>
      <Slot $w={2} $gap={7}><Icon w={2} h={14}><path d="M1 0V14" /></Icon></Slot>
      <Slot $w={14} $gap={9}><Icon w={13} h={11} sw={1.3}><path d="M0 1H13M0 4H13M0 7H13M0 10H13" /></Icon></Slot>
    </PanelHead>
    <Preview />
    <FormRow $h={28}>
      <Caption>Name:</Caption>
      <NameInput $bg="#454545" $line="#727272" $color="#e6e6e6">rectangle</NameInput>
    </FormRow>
    <FormRow $h={40}>
      <Caption>Preset:</Caption>
      <Combo $w={241}>Choose<Drop $w={26} $line="#5f5f5f"><Solid w={9} h={5}><path d="M0 0H9L4.5 5Z" /></Solid></Drop></Combo>
    </FormRow>
    <FormRow $off $h={28}>
      <Caption>Event(s):</Caption>
      <Combo $w={207}>On Page Load<Drop $w={26} $line="#5f5f5f"><Solid w={9} h={5} fill="#8a8a8a"><path d="M0 0H9L4.5 5Z" /></Solid></Drop></Combo>
      <Slot $w={22} $gap={10}>
        <Icon w={22} h={17} stroke="#8a8a8a"><path d="M8 7H5A4 4 0 0 0 5 14H13A4 4 0 0 0 16 12.5" strokeWidth="2" /><circle cx="15" cy="6" r="5.3" strokeWidth="1.3" /><path d="M15 0V12M9 6H21" strokeWidth="1.2" /></Icon>
      </Slot>
    </FormRow>
    <FormRow $off $h={38}>
      <Caption />
      <Slot $w={23} $gap={1}><Check $off /></Slot>
      <Text $color="#8c8c8c">Reverse on Roll Off</Text>
    </FormRow>
    <FormRow $off $h={32}>
      <Caption>Duration:</Caption>
      <NumField off w={67} value="1" />
      <Text $gap={7} $color="#ababab">second</Text>
    </FormRow>
    <FormRow $off $h={36}>
      <Caption>Play:</Caption>
      <NumField off w={67} value="1" />
      <Text $gap={7} $color="#ababab">time</Text>
      <Slot $w={16} $gap={36}><Check $off /></Slot>
      <Text $gap={7} $color="#8c8c8c">Loop</Text>
    </FormRow>
    <FormRow $off $h={32}>
      <Caption>Speed:</Caption>
      <Select>None<Chevron color="#cfcfcf" w={1.4} /></Select>
    </FormRow>
    <FormRow $h={24}>
      <Slot $w={20} $gap={15}><Chevron color="#ccc" w={1.4} /></Slot>
      Properties
    </FormRow>
    <FormRow $off $h={33}>
      <Caption>Animate:</Caption>
      <Select>From Current Appearance<Chevron color="#cfcfcf" w={1.4} /></Select>
    </FormRow>
    <FormRow $h={34}>
      <Caption />
      Animate To
    </FormRow>
    <FormRow $h={33}>
      <Caption>Rotate:</Caption>
      <NumField w={104} value="0°" drop strong pad={5} />
      <Slot $w={34} $gap={101}><RefGrid active={4} color="#8a8a8a" on="#8a8a8a" /></Slot>
    </FormRow>
    <FormRow $h={35}>
      <Caption>Scale &nbsp; W:</Caption>
      <NumField w={91} value="100%" strong pad={7} />
      <Text $gap={12}>H:</Text>
      <Slot $w={91} $gap={7}><NumField w={91} value="100%" strong pad={7} /></Slot>
      <Slot $w={19} $gap={4}><ChainLink w={19} /></Slot>
    </FormRow>
    <FormRow $h={33}>
      <Caption>Opacity:</Caption>
      <Select $bg="#454545" $line="#727272" $color="#fff">None<Chevron /></Select>
    </FormRow>
    <FormRow $off $h={34}>
      <Caption>Visibility:</Caption>
      <Slot $w={23} $gap={1}><Check $off /></Slot>
      <Text $color="#8c8c8c">Hide Until Animated</Text>
    </FormRow>
    <FormRow $off $h={22}>
      <Caption />
      <Slot $w={23} $gap={1}><Check $off /></Slot>
      <Text $color="#8c8c8c">Hide After Animating</Text>
    </FormRow>
    <Push />
    <PanelFoot>
      <DarkKey $w={34} $gap={1}>
        <Icon w={17} h={16}><path d="M1 1H16V11.5H1ZM8.5 12V15M3.5 15H13.5" /><path d="M6 3.5V9.5L12 6.5Z" fill="#c4c4c4" stroke="none" /></Icon>
      </DarkKey>
      <Slot $w={22} $gap={9}><Icon w={22} h={14} stroke="#8f8f8f"><path d="M14 4V1H1V13H14V10M8 7H20M17 3.5 20.5 7 17 10.5" /><path d="M5 4.5H9.5V9.5H5Z" fill="#8f8f8f" stroke="none" /></Icon></Slot>
      <Slot $w={15} $gap={18}><Icon w={14} h={16}><circle cx="7" cy="9.5" r="5.3" /><path d="M4 1H10M7 1V4M7 9.5 10 6.5M0 4 2.5 2" /></Icon></Slot>
      <Slot $w={26} $gap={173}><Icon w={26} h={14} stroke="#8a8a8a"><path d="M1 9H4V12H1ZM4 9.5C8 5 15 4 21 7" /><circle cx="12" cy="6" r="3.5" fill="#777" /><path d="M19 3 25.5 7.5 19 10.5Z" fill="#8a8a8a" stroke="none" /></Icon></Slot>
      <Slot $w={15} $gap={15}><Icon w={14} h={17} stroke="#8a8a8a"><path d="M0 3.5H14M4.5 3V1H9.5V3M2 4V15.7H12V4M5 6.5V13M7.2 6.5V13M9.5 6.5V13" /></Icon></Slot>
    </PanelFoot>
  </Panel>
)

const App = () => {
  return (
    <Fragment>
      <GlobalStyle />
      <Screen>
        <MacBar>
          <Slot $w={43} $gap={21}>
            <svg width="17" height="22" viewBox="0 0 17 21" fill="#2f3a45"><path d="M8.7 5.6C10 5 13.5 3.6 16 7.2 12.8 9 13.3 13.3 16.8 14.7 15.5 18 13.5 20.5 12 20.5S10 19.7 8.8 19.7 6.8 20.5 5.5 20.5C2.5 20.5 0 15.5 0 11.3 0 5 5.5 3.5 8.7 5.6ZM8.5 4.7C8.3 2.3 10.2 0 12.5-.5 12.8 2.3 10.7 4.7 8.5 4.7Z" /></svg>
          </Slot>
          <MacItem $w={135} $bold $ls={0.7}>InDesign CC</MacItem>
          {menus.map(([name, w]) => <MacItem key={name} $w={w}>{name}</MacItem>)}
          <Push />
          <Slot $w={44}>
            <svg width="25" height="18" viewBox="0 0 25 18"><path d="M8 17A7 7 0 0 1 7 3.5 9 9 0 0 1 24 9C24 13.5 21 17 16 17Z" fill="#0d1117" stroke="#0d1117" strokeWidth="1.6" /><path d="M8 15.500A5.500 5.500 0 0 1 8 5 7.500 7.500 0 0 1 22.500 9C22.500 13 20 15.500 16 15.500M13 13.500C11 15 4.500 14 5 10.500 5.500 7 9.500 7 11.500 9L16 13M12 6.500C15 4 20 6 19.500 10" fill="none" stroke="#e8eef6" strokeWidth="1.3" /></svg>
          </Slot>
          <Slot $w={34}>
            <svg width="18" height="22" viewBox="0 0 18 22"><path d="M9 1 16.5 3C17.5 11 15 17 9 21 3 17 .5 11 1.5 3Z" fill="none" stroke="#4a525c" strokeWidth="1.7" /><path d="M9 4 14 5.5C14.5 11 13 15 9 18 5 15 3.5 11 4 5.5Z" fill="#3a424c" /></svg>
          </Slot>
          <Slot $w={40}>
            <svg width="27" height="20" viewBox="0 0 27 20" fill="none" stroke="#363f49" strokeWidth="2"><path d="M1 6.5A18 18 0 0 1 26 6.5M5 10.5A12.5 12.5 0 0 1 22 10.5M9 14.2A6.5 6.5 0 0 1 18 14.2" /><path d="M11 16.5 13.5 19.5 16 16.5Z" fill="#363f49" stroke="none" /></svg>
          </Slot>
          <Slot $w={41}>
            <svg width="18" height="16" viewBox="0 0 18 16"><path d="M0 5H4L10 0V16L4 11H0Z" fill="#363f49" /><path d="M12.5 5A5 5 0 0 1 12.5 11M15 3A9 9 0 0 1 15 13" fill="none" stroke="#9aa2ac" strokeWidth="1.4" /></svg>
          </Slot>
          <MacItem $w={44} $ls={-0.9}>100%</MacItem>
          <Slot $w={54}>
            <svg width="31" height="16" viewBox="0 0 31 16"><rect x="1" y="1" width="26" height="14" rx="3" fill="none" stroke="#363f49" strokeWidth="1.8" /><path d="M3.5 3.5H24.5V12.5H3.5Z" fill="#363f49" /><path d="M16.5 1 9 8.5H14.200L12 15 20 7.200H15.300Z" fill="#363f49" stroke="#ebf0f8" strokeWidth="1.2" /><path d="M29.500 5.500V10.500" stroke="#363f49" strokeWidth="1.800" /></svg>
          </Slot>
          <MacItem $w={143} $ls={0.7}>Sun 11:46 AM</MacItem>
          <Slot $w={41}>
            <svg width="19" height="19" fill="none" stroke="#363f49" strokeWidth="1.8"><circle cx="7.5" cy="7.5" r="6.3" /><path d="M12 12 18 18" strokeWidth="2.2" /></svg>
          </Slot>
          <Slot $w={36}>
            <svg width="21" height="21" viewBox="0 0 21 21"><defs><linearGradient id="siri" x1="0.6" y1="0" x2="0.4" y2="1"><stop offset="0" stopColor="#7a2a6a" /><stop offset="0.3" stopColor="#c048a8" /><stop offset="0.65" stopColor="#2a7fc8" /><stop offset="1" stopColor="#102a60" /></linearGradient></defs><circle cx="10.5" cy="10.5" r="9.8" fill="url(#siri)" stroke="#1a1a30" strokeWidth="1.4" /><path d="M4 7 17 14M12 4 9 17M4 13 17 9" stroke="#cfeaff" strokeWidth="1.2" /></svg>
          </Slot>
          <Slot $w={54}>
            <svg width="24" height="15" stroke="#363f49" strokeWidth="2"><path d="M0 1H2.5M0 5.3H2.5M0 9.7H2.5M0 14H2.5M5 1H24M5 7.5H20M5 14H24" /></svg>
          </Slot>
        </MacBar>

        <Frame>
          <AppBar>
            <Light $gap={5} $color="#fb5350" $dot />
            <Light $gap={10} $color="#fdbd2f" />
            <Light $gap={10} $color="#2acb41" />
            <Badge $gap={27}>Br</Badge>
            <Badge $gap={25}>St</Badge>
            <Zoom $w={77} $gap={22}>52.8%</Zoom>
            <Chevron />
            <Rule $h={26} $gap={17} />
            <Slot $w={34} $gap={12}><Solid w={24} h={20}><path d="M7 7H24V20H7Z" /><path d="M7.5 0V4M11.5 0V4M15.5 0V4M19.5 0V4M23 0V4M0 6H4M0 10.5H4M0 15H4M0 19H4" stroke="#c4c4c4" strokeWidth="1.5" /></Solid></Slot>
            <Slot $w={30}><Chevron /></Slot>
            <Slot $w={33}><Icon w={21} h={19} sw={1.6}><path d="M1 5V1H5M16 1H20V5M20 14V18H16M5 18H1V14" /><path d="M3.5 3.5H17.5V15.5H3.5Z" fill="#c4c4c4" stroke="none" /></Icon></Slot>
            <Slot $w={28}><Chevron /></Slot>
            <Slot $w={34}><Solid w={24} h={15}><path d="M0 0H11V15H0ZM13 0H24V6.5H13ZM13 8.5H24V15H13Z" /></Solid></Slot>
            <Slot $w={32}><Chevron /></Slot>
            <Slot $w={22}><Solid w={22} h={23}><path d="M22 0C13 2 7 7 5 14L8 18C16 16 22 9 22 0ZM8 6C4 6 1 9 0 13L4 12ZM18 12C18 17 15 20 10 22L11 18Z" /><path d="M6 17 17 4" stroke="#535353" /></Solid></Slot>
            <Title $w={192} $gap={276.5}>Adobe InDesign CC 2019</Title>
            <Publish $gap={267.5}>
              <Icon w={17} h={18}><path d="M4.5 7H1V16.5H16V7H12.5M8.5 13V3M5 6 8.5 2 12 6" strokeWidth="1.8" /></Icon>
              Publish Online
            </Publish>
            <Slot $w={18} $gap={19}><Icon w={18} h={25} sw={1.4}><path d="M6 18C6 14 1 13 1 8A8 8 0 0 1 17 8C17 13 12 14 12 18Z" /><path d="M6 18H12V22L9 25 6 22Z" fill="#c4c4c4" stroke="none" /></Icon></Slot>
            <Rule $h={26} $gap={18} />
            <Workspace $w={156} $gap={17}>Digital Publishing</Workspace>
            <Chevron w={2} />
            <Rule $h={26} $gap={20} />
            <StockSearch $gap={7}>
              <Icon w={22} h={15} sw={1.6}><circle cx="9.5" cy="5.5" r="4.7" /><path d="M6 9 0.5 13.5" strokeWidth="2" /><path d="M13.5 9H22L17.7 13Z" fill="#c4c4c4" stroke="none" /></Icon>
              Adobe Stock
            </StockSearch>
          </AppBar>

          <ControlBar>
            <SideGrip />
            <Slot $w={34} $gap={26}><RefGrid active={0} /></Slot>
            <Stack $w={12} $gap={16}><AxisLabel>X:</AxisLabel><AxisLabel>Y:</AxisLabel></Stack>
            <Stack $w={114} $gap={4}><NumField w={114} value="88 px" /><NumField w={114} value="114 px" /></Stack>
            <Stack $w={16} $gap={17}><AxisLabel>W:</AxisLabel><AxisLabel>H:</AxisLabel></Stack>
            <Stack $w={114} $gap={1}><NumField w={114} value="734 px" /><NumField w={114} value="490 px" /></Stack>
            <Slot $w={18} $gap={13}><Link cut /></Slot>
            <Rule $gap={12} />
            <Stack $w={19} $gap={10.5}>
              <Icon w={19} h={19}><path d="M1 1H18V18H1Z" strokeDasharray="1.5 1.5" /><path d="M18 1H1V18M3 9.5H13" /><path d="M11 5.5 16 9.5 11 13.5Z" fill="#c4c4c4" stroke="none" /></Icon>
              <Icon w={19} h={19}><path d="M1 1H18V18H1Z" strokeDasharray="1.5 1.5" /><path d="M18 1H1V18M9.5 3V13" /><path d="M5.5 11 9.5 16 13.5 11Z" fill="#c4c4c4" stroke="none" /></Icon>
            </Stack>
            <Stack $w={113} $gap={6}><NumField w={113} value="100%" drop strong pad={5} /><NumField w={113} value="100%" drop strong pad={5} /></Stack>
            <DarkKey $gap={8}><Link size={17} /></DarkKey>
            <Stack $w={16} $gap={13}>
              <Icon w={15} h={13} sw={1.7}><path d="M12 0 1 12H15M7 4A8 8 0 0 1 10.5 12" /></Icon>
              <Solid w={15} h={12}><path d="M4.5 0H15L10.5 12H0Z" /></Solid>
            </Stack>
            <Stack $w={113} $gap={7}><NumField w={113} value="0°" drop strong pad={5} /><NumField w={113} value="0°" drop strong pad={5} /></Stack>
            <Rule $gap={7} />
            <Stack $w={58} $gap={12}>
              <Row $gap={13}>
                <Icon w={22} h={22} sw={1.8}><path d="M1 12A9.5 9.5 0 0 1 18 5.5" /><path d="M1 12A9.5 9.5 0 0 0 20 12" strokeDasharray="1.5 2" strokeWidth="1.5" /><path d="M21.5 1V9.5H13Z" fill="#c4c4c4" stroke="none" /></Icon>
                <Icon w={22} h={22} sw={1.8}><g transform="matrix(-1 0 0 1 22 0)"><path d="M1 12A9.5 9.5 0 0 1 18 5.5" /><path d="M1 12A9.5 9.5 0 0 0 20 12" strokeDasharray="1.5 2" strokeWidth="1.5" /><path d="M21.5 1V9.5H13Z" fill="#c4c4c4" stroke="none" /></g></Icon>
              </Row>
              <Row $gap={13}>
                <Icon w={23} h={22}><path d="M1 4V18L7.5 11Z" /><path d="M11.5 1V22" strokeDasharray="1.5 1.5" /><path d="M22.5 3.5V18.5L14.5 11Z" fill="#c4c4c4" stroke="none" /></Icon>
                <Icon w={21} h={22}><path d="M4 1H17L10.5 8Z" /><path d="M0 11.5H21" strokeDasharray="1.5 1.5" /><path d="M3 22H18L10.5 14Z" fill="#c4c4c4" stroke="none" /></Icon>
              </Row>
            </Stack>
            <Slot $w={34} $gap={13}>
              <Icon w={34} h={34} stroke="#fff" sw={1.8}><path d="M1 5V1H5M29 1H33V5M33 29V33H29M5 33H1V29" /><text x="9" y="25" fontSize="28" fill="#e8e8e8" stroke="none" fontFamily="Liberation Serif, serif">P</text></Icon>
            </Slot>
            <Rule $gap={9} />
            <Stack $w={58} $gap={13}>
              <Row $gap={15}><Tree dir="up" dim /><Tree dir="left" /></Row>
              <Row $gap={15}><Tree dir="down" dim /><Tree dir="right" /></Row>
            </Stack>
            <Rule $gap={9} />
            <Stack $w={54} $gap={8}>
              <Row $gap={4}><NoneSwatch /><ArrowKey><Chevron dir="right" /></ArrowKey></Row>
              <Row $gap={4}><NoneSwatch stroke /><ArrowKey><Chevron dir="right" /></ArrowKey></Row>
            </Stack>
            <Rule $gap={5} />
            <Stack $w={113} $gap={7}>
              <NumField w={113} value="0 pt" drop strong pad={4} />
              <Field $w={113}>
                <Sample><svg width="71" height="10"><rect width="71" height="10" /></svg></Sample>
                <Drop><Chevron /></Drop>
              </Field>
            </Stack>
            <Rule $gap={6} />
            <Stack $w={116} $gap={12}>
              <Row $gap={17}>
                <Icon w={21} h={17} sw={1.5}><path d="M1.500 1.500H15V15H1.500Z" strokeDasharray="3.5 2" strokeWidth="2.2" /><path d="M16.5 13.5H21.5L19 16.5Z" fill="#c4c4c4" stroke="none" /></Icon>
                <Icon w={18} h={19}><path d="M1 15H17V19H1Z" fill="#8a8a8a" stroke="none" /><path d="M2 1H16V14H2Z" strokeWidth="2" fill="#5c5c5c" /></Icon>
                <Icon w={20} h={18}><text x="3" y="14" fontSize="17" fontStyle="italic" fill="#c4c4c4" stroke="none">fx</text><path d="M17.5 14H22.5L20 17Z" fill="#c4c4c4" stroke="none" /></Icon>
              </Row>
              <Row $gap={9}>
                <svg width="15" height="15"><rect x="0.7" y="0.7" width="13.6" height="13.6" fill="#777" stroke="#c4c4c4" strokeWidth="1.4" /><path d="M2 2H5.5V5.5H2ZM9.5 2H13V5.5H9.5ZM5.5 5.5H9.5V9.5H5.5ZM2 9.5H5.5V13H2ZM9.5 9.5H13V13H9.5Z" fill="#b8b8b8" /></svg>
                <Field $w={91}><Value $pad={5} $strong>100%</Value><Drop><Chevron dir="right" /></Drop></Field>
              </Row>
            </Stack>
            <Rule $gap={4} />
            <Stack $w={60} $gap={9}>
              <Row $gap={13}>
                <DarkKey><WrapLines><path d="M0 4.7H19M0 8.5H19M0 12.3H19" /><path d="M5.5 3H13.5V14H5.5Z" fill="#777" stroke="none" /><path d="M6 4.7H13M6 8.5H13M6 12.3H13" stroke="#ddd" strokeWidth="2" /></WrapLines></DarkKey>
                <WrapLines sides><path d="M6 3.5H13V13.5H6Z" strokeWidth="1.8" /></WrapLines>
              </Row>
              <Row $gap={17}>
                <Slot $w={19} $gap={5}><WrapLines sides><circle cx="9.5" cy="8.5" r="6" fill="#c4c4c4" stroke="none" /></WrapLines></Slot>
                <WrapLines><path d="M5 4.5H14V10H5Z" fill="#c4c4c4" stroke="none" /></WrapLines>
              </Row>
            </Stack>
            <Rule $gap={11} />
            <Stack $w={19} $gap={10}>
              <svg width="18" height="19"><path d="M6 3.5H12M6 15.5H12M3 7V12M15 7V12" stroke="#8a8a8a" strokeWidth="2" /><path d="M0 0H5.5V5.5H0ZM12.5 0H18V5.5H12.5ZM0 13.5H5.5V19H0ZM12.5 13.5H18V19H12.5Z" fill="#2d8ceb" /></svg>
            </Stack>
            <Stack $w={113} $gap={6}>
              <NumField w={113} value="12 px" />
              <Field $w={113}>
                <Sample><svg width="82" height="21"><path d="M-2 2H73V21" fill="none" stroke="#000" strokeWidth="2" /></svg></Sample>
                <Drop><Chevron /></Drop>
              </Field>
            </Stack>
            <Rule $gap={7} />
            <Stack $w={67} $gap={12}>
              <Row $gap={14}>
                <Icon w={21} h={21} sw={1.3}><path d="M3 2H18V14H3Z" fill="#c4c4c4" /><path d="M1 1H4V4H1ZM17 1H20V4H17ZM1 12H4V15H1ZM17 12H20V15H17Z" fill="#535353" /><path d="M2 17V20.5H19V17" strokeDasharray="2.5 1.5" /></Icon>
                <FitBox><path d="M4 2H14V18H4Z" fill="#c4c4c4" stroke="none" /></FitBox>
              </Row>
              <Row $gap={7}><Check /><Value $pad={0.1} $strong>Auto-Fit</Value></Row>
            </Stack>
            <Rule $h={30} $top />
            <Stack $w={91} $gap={13}>
              <Row $gap={14}>
                <FitBox><path d="M3 3H10V10H3Z" fill="#c4c4c4" stroke="none" /><path d="M8 14H10M9 11V16M12 9H17M15 7V11" /></FitBox>
                <FitBox><path d="M3 3H11V11H3Z" fill="#c4c4c4" stroke="none" /><path d="M7 14H10M9 12V17M13 9H18M14 7V11" /></FitBox>
                <FitBox><path d="M6.5 6H14.5V14H6.5Z" fill="#c4c4c4" stroke="none" /></FitBox>
              </Row>
              <Slot $w={21} $gap={70}>
                <Icon w={21} h={20}><path d="M1 1H20V19H1Z" strokeDasharray="2.5 1.5" /><path d="M4 3.5H7L10.5 5 14 3.5H17V6.5L15.5 10 17 13.5V16.5H14L10.5 15 7 16.5H4V13.5L5.5 10 4 6.5Z" fill="#c4c4c4" stroke="none" /></Icon>
              </Slot>
            </Stack>
            <Rule $gap={12} />
            <Slot $w={14} $gap={97}><Solid w={13} h={21}><path d="M4 0H8.5L6.5 7.5 13 6 4.5 21 6.5 11 0 12.5Z" /></Solid></Slot>
            <Rule $gap={12} />
            <Stack $w={16} $gap={11}>
              <Icon w={15} h={14} sw={2.8}><circle cx="7.5" cy="7" r="4" /><path d="M7.5 0V3M7.5 11V14M0.5 7H3.5M11.5 7H14.5M2.5 2 4.5 4M10.5 10 12.5 12M12.5 2 10.5 4M4.5 10 2.5 12" strokeWidth="2.2" /></Icon>
              <Icon w={16} h={10} sw={1.4}><path d="M0 1H16M0 5H16M0 9H16" /></Icon>
            </Stack>
          </ControlBar>

          <Body>
            <ToolColumn>
              <ColumnHead><Icon w={11} h={7} sw={1.2}><path d="M1 0 4 3.5 1 7M6 0 9 3.5 6 7" /></Icon></ColumnHead>
              <ToolGrip><Grip /></ToolGrip>
              {tools.map((t, i) => (
                <Tool key={i} $gap={t.gap} $more={t.more} $on={t.on}>{t.icon}</Tool>
              ))}
              <Slot $w={38}>
                <svg width="38" height="94" viewBox="0 0 38 94">
                  <path d="M4 14H14V23H4Z" fill="#222" stroke="#999" />
                  <path d="M0 9H10V19H0Z" fill="#fff" stroke="#222" strokeWidth="1.5" />
                  <path d="M1 18 9 10" stroke="#f00" />
                  <path d="M9 18V20H12V14" fill="none" stroke="#ddd" strokeWidth="1.3" />
                  <path d="M28 16H34V22" fill="none" stroke="#c4c4c4" strokeWidth="1.7" />
                  <path d="M25 16 30 12V20ZM30.5 21H38L34.2 26Z" fill="#c4c4c4" />
                  <path d="M13 44H39V69H13Z" fill="#fff" />
                  <path d="M20 51H32V62H20Z" fill="#535353" stroke="#999" />
                  <path d="M15 67 36 46" stroke="#f00" strokeWidth="3" />
                  <path d="M0 31H26V57H0Z" fill="#fff" stroke="#777" strokeWidth="0.6" />
                  <path d="M1 56 25 33" stroke="#f00" strokeWidth="3" />
                  <rect x="1" y="80" width="18" height="15" rx="3" fill="#303030" />
                  <path d="M6 82H15V92H6Z" fill="#666" stroke="#c4c4c4" strokeWidth="1.5" />
                  <path d="M26 82H37V85H35.5V84H33V91H34.5V93H28.5V91H30V84H27.5V85H26Z" fill="#8a8a8a" />
                </svg>
              </Slot>
              <Tool $gap={10} $on $more>
                <svg width="21" height="18"><rect x="0.5" y="0.5" width="20" height="17" fill="#fff" stroke="#888" /><path d="M2 16.5 19 1.5" stroke="#f00" strokeWidth="2.5" /></svg>
              </Tool>
              <Tool $gap={10} $on $more>
                <Icon w={15} h={15}><path d="M1 1H14V14H1ZM4 5H9V9H4ZM9 7.5H12V11.5H7V9" /></Icon>
              </Tool>
            </ToolColumn>

            <DocColumn>
              <TabStrip>
                <DocTab>
                  <Icon w={9} h={9} stroke="#eee" sw={1.7}><path d="M0.5 0.5 8.5 8.5M8.5 0.5 0.5 8.5" /></Icon>
                  *Untitled-3 @ 53% [GPU Preview]
                </DocTab>
              </TabStrip>
              <Row>
                <svg width="21" height="21"><rect width="21" height="21" fill="#1f1f1f" /><path d="M6.5 0V21M0 6.5H20" stroke="#bbb" strokeDasharray="1 1.5" /><path d="M20.5 0V21M0 20.5H21" stroke="#8c8c8c" /></svg>
                <HorizontalRuler />
              </Row>
              <ViewRow>
                <VerticalRuler />
                <Canvas>
                  <Page>
                    <Margins />
                  </Page>
                  <FrameShape width="777" height="520" fill="none" stroke="#5b9cf5">
                    <g transform="translate(0.5 -0.5)">
                      <path d="M0 0H776V519H0ZM0 0 776 519M776 0 0 519" />
                      {handles.map(([x, y]) => <rect key={`${x}-${y}`} x={x - 4} y={y - 4} width="8" height="8" fill="#fff" />)}
                    </g>
                  </FrameShape>
                </Canvas>
                <VScroll>
                  <VThumb />
                  <Chevron color="#aaa" w={1.4} />
                </VScroll>
              </ViewRow>
              <StatusBar>
                <Slot $w={12} $gap={16}><Solid w={12} h={11} fill="#8f8f8f"><path d="M0 0H2.5V11H0ZM11 0V11L4 5.5Z" /></Solid></Slot>
                <Slot $w={7} $gap={16}><Solid w={7} h={10} fill="#8f8f8f"><path d="M7 0V10L0 5Z" /></Solid></Slot>
                <PageField>1<Push /><Drop><Chevron /></Drop></PageField>
                <Slot $w={7} $gap={18}><Solid w={7} h={10} fill="#8f8f8f"><path d="M0 0V10L7 5Z" /></Solid></Slot>
                <Slot $w={12} $gap={17}><Solid w={12} h={11} fill="#8f8f8f"><path d="M9.5 0H12V11H9.5ZM1 0V11L8 5.5Z" /></Solid></Slot>
                <Slot $w={22} $gap={22}><Icon w={21} h={17} sw={2.8}><path d="M4 14A7 7 0 1 1 14 13" /><path d="M6.5 15V6H10.500V11H14" strokeWidth="1.3" /><path d="M16.5 13.5H22L19 16.5Z" fill="#c4c4c4" stroke="none" /></Icon></Slot>
                <Slot $w={134} $gap={19}>Digital Publishing</Slot>
                <Chevron />
                <Dot />
                <Slot $w={82} $gap={6}>No errors</Slot>
                <Chevron color="#c0c0c0" w={1.5} />
                <HScroll>
                  <Chevron dir="left" color="#999" w={1.4} />
                  <HThumb />
                  <Chevron dir="right" color="#999" w={1.4} />
                </HScroll>
                <Slot $w={20} $gap={5}><Icon w={20} h={14}><path d="M1 1H19V13H1ZM10 1V13" /></Icon></Slot>
                <Slot $w={12} $gap={7}><Icon w={12} h={12} stroke="#7a7a7a" sw={1.5}><path d="M0 11H12M3 8.5H12M6 6H12M9 3.5H12M11 1H12" strokeDasharray="1.5 1.5" /></Icon></Slot>
              </StatusBar>
              <AnimationPanel />
              <Tooltip>Preview Spread: EPUB.<br />Option-Click to Preview Spread: SWF.</Tooltip>
            </DocColumn>

            <PanelList>
              <ColumnHead $end={7}><Icon w={10} h={7} sw={1.2}><path d="M4 0 1 3.5 4 7M9 0 6 3.5 9 7" /></Icon></ColumnHead>
              {panels.map(([name, icon], i) => (
                <ListCell key={name}>
                  <Grip />
                  <ListButton $on={i === 0}><ListIcon>{icon}</ListIcon>{name}</ListButton>
                </ListCell>
              ))}
            </PanelList>

            <IconDock>
              <ColumnHead $end={8}><Icon w={10} h={7} sw={1.2}><path d="M4 0 1 3.5 4 7M9 0 6 3.5 9 7" /></Icon></ColumnHead>
              {dockGroups.map(([h, icons]) => (
                <DockGroup key={h} $h={h}>
                  <Grip />
                  {icons.map((icon, i) => <DockItem key={i} $first={i === 0}>{icon}</DockItem>)}
                </DockGroup>
              ))}
            </IconDock>
          </Body>
        </Frame>

        <Desktop>
          <svg width="1874" height="17">
            <defs>
              <linearGradient id="dock">
                <stop offset="0" stopColor="#a8603f" /><stop offset="0.15" stopColor="#a06038" /><stop offset="0.19" stopColor="#955842" />
                <stop offset="0.25" stopColor="#a3683c" /><stop offset="0.35" stopColor="#a56a35" /><stop offset="0.48" stopColor="#8a6640" />
                <stop offset="0.58" stopColor="#a36a38" /><stop offset="0.72" stopColor="#965a42" /><stop offset="0.85" stopColor="#86643c" />
                <stop offset="1" stopColor="#6c6242" />
              </linearGradient>
            </defs>
            <path d="M250 17V5Q250 0 255 0H1613Q1618 0 1618 5V17Z" fill="url(#dock)" />
            <circle cx="395" cy="36" r="22" fill="#f2f7fd" />
            <circle cx="489" cy="41" r="29" fill="#df4b3e" />
            <path d="M571 17 608 11V17Z" fill="#fbd23c" />
            <circle cx="677" cy="36" r="22" fill="#f2f4f8" />
            <path d="M735 16.5H808" stroke="#aaa" />
            <path d="M861 17V16Q866 12 871 16V17Z" fill="#ff9d12" />
            <path d="M919 17Q922 9 936 8H985Q999 9 1002 17Z" fill="#282828" />
            <path d="M1014.5 17V11.5H1093.5V17" fill="#330012" stroke="#f8599f" strokeWidth="4" />
            <path d="M1108.5 17V11.5H1187.5V17" fill="#260000" stroke="#ff4522" strokeWidth="4" />
            <path d="M1202.5 17V11.5H1281.5V17" fill="#0c2413" stroke="#0ee68f" strokeWidth="4" />
            <circle cx="1336" cy="36" r="22" fill="#f2f7fd" />
            <path d="M1404.5 14V17" stroke="#3a2a1a" />
            <path d="M1538 17 1544 13 1554 11 1563 13 1572 11 1580 15 1590 13 1593 17Z" fill="#d8d8d8" />
          </svg>
        </Desktop>
      </Screen>
    </Fragment>
  );
}
export default App;
